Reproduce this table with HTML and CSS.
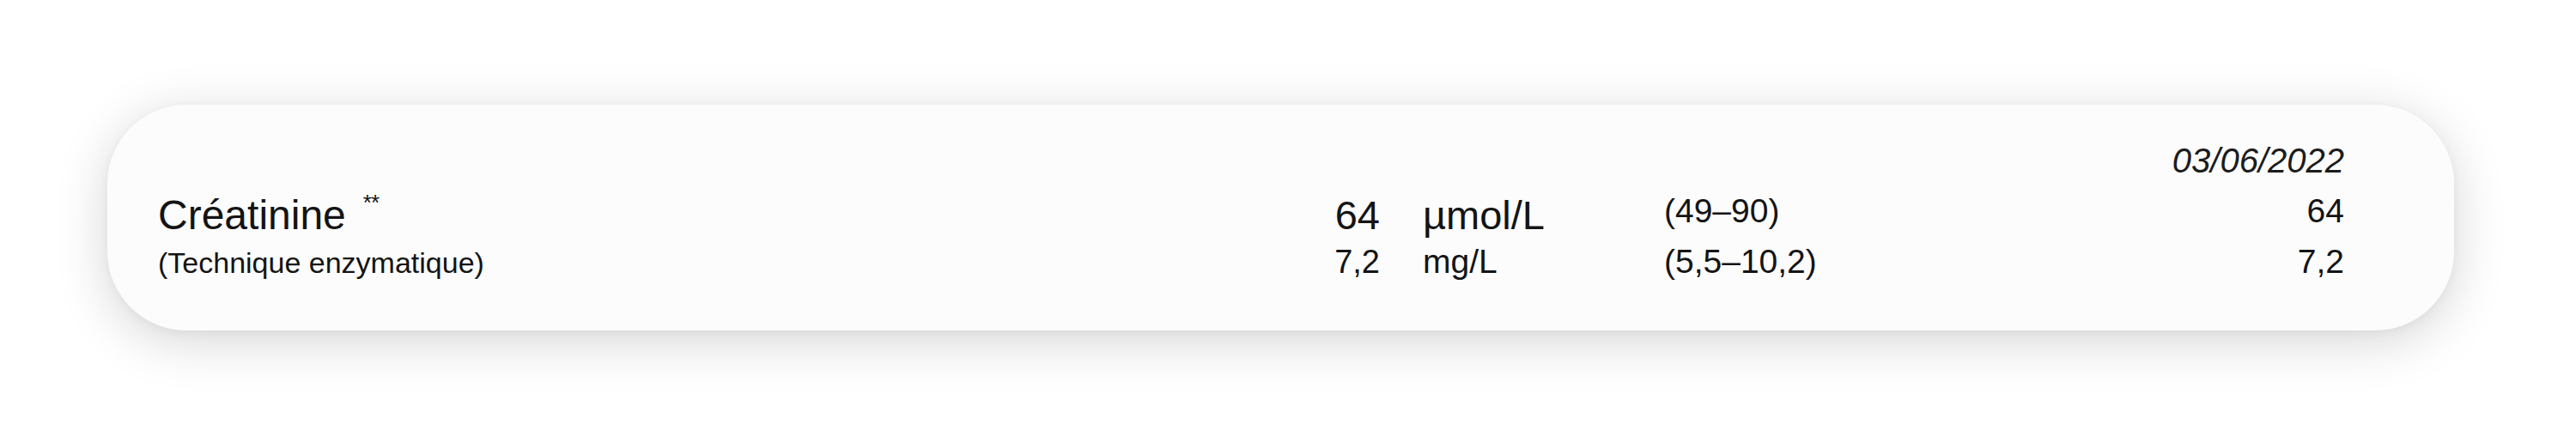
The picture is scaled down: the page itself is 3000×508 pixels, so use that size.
FILE: index.html
```html
<!DOCTYPE html>
<html lang="fr">
<head>
<meta charset="utf-8">
<title>Créatinine</title>
<link rel="stylesheet" href="styles.css">
</head>
<body>
<div class="page">
  <section class="card">
    <div class="cell date-cell">03/06/2022</div>

    <div class="cell name r1">Créatinine<sup class="stars">**</sup></div>
    <div class="cell value r1 big">64</div>
    <div class="cell unit r1 big">µmol/L</div>
    <div class="cell range r1 raised">(49–90)</div>
    <div class="cell prev r1 raised">64</div>

    <div class="cell method r2">(Technique enzymatique)</div>
    <div class="cell value r2">7,2</div>
    <div class="cell unit r2">mg/L</div>
    <div class="cell range r2">(5,5–10,2)</div>
    <div class="cell prev r2">7,2</div>
  </section>
</div>
</body>
</html>
```

FILE: styles.css
```css
html, body {
  margin: 0;
  padding: 0;
  background: #ffffff;
}

body {
  font-family: "Liberation Sans", Arial, Helvetica, sans-serif;
  color: #141414;
  width: 3000px;
  height: 508px;
  overflow: hidden;
}

.page {
  padding: 122px 142px 0 125px;
}

.card {
  box-sizing: border-box;
  height: 263px;
  background: #fcfcfc;
  border-radius: 92px;
  box-shadow: 0 12px 60px rgba(0, 0, 0, 0.17), 0 2px 12px rgba(0, 0, 0, 0.04);
  padding: 45px 128px 0 59px;
  display: grid;
  grid-template-columns: 1303px 120px 331px 1fr auto;
  align-items: baseline;
  align-content: start;
}

.cell {
  white-space: nowrap;
}

.date-cell {
  grid-column: 5;
  grid-row: 1;
  font-style: italic;
  font-size: 40px;
  line-height: 40px;
  text-align: right;
  margin-bottom: 19px;
  color: #1c1c1c;
}

.r1 {
  grid-row: 2;
  line-height: 50px;
  margin-bottom: 9px;
}

.r1.raised {
  align-self: start;
  line-height: 40px;
}

.r2 {
  grid-row: 3;
  line-height: 40px;
}

.name {
  grid-column: 1;
  font-size: 48px;
}

.stars {
  font-size: 26px;
  vertical-align: 22px;
  line-height: 0;
  margin-left: 20px;
  letter-spacing: -1px;
}

.method {
  grid-column: 1;
  font-size: 34px;
}

.value {
  grid-column: 2;
  text-align: right;
  font-size: 38px;
}

.value.big {
  font-size: 47px;
}

.unit {
  grid-column: 3;
  padding-left: 50px;
  font-size: 39px;
}

.unit.big {
  font-size: 47px;
}

.range {
  grid-column: 4;
  font-size: 39px;
}

.prev {
  grid-column: 5;
  text-align: right;
  font-size: 39px;
}
```
